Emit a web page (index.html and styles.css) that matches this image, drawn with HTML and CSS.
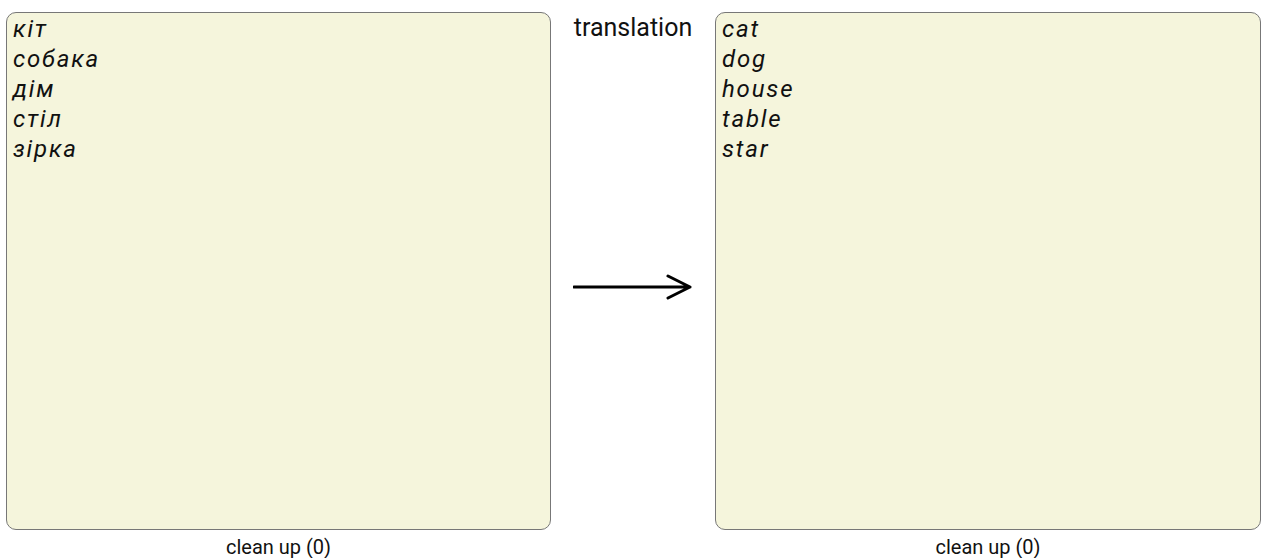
FILE: index.html
```html
<!DOCTYPE html>
<html lang="uk">
<head>
    <meta charset="UTF-8">
    <title>Translation</title>
    <link rel="stylesheet" href="styles.css">
</head>
<body>
    <div class="page">
        <div class="column">
            <div class="words">
                <div>кіт</div>
                <div>собака</div>
                <div>дім</div>
                <div>стіл</div>
                <div>зірка</div>
            </div>
            <div class="clean">clean up (0)</div>
        </div>
        <div class="middle">
            <div class="title">translation</div>
            <div class="arrow-wrap">
                <svg class="arrow" width="120" height="26" viewBox="0 0 120 26">
                    <path d="M1 13 H117 M95 2 L117 13 L95 24" fill="none" stroke="#000" stroke-width="3" stroke-linecap="round" stroke-linejoin="round"/>
                </svg>
            </div>
        </div>
        <div class="column">
            <div class="words">
                <div>cat</div>
                <div>dog</div>
                <div>house</div>
                <div>table</div>
                <div>star</div>
            </div>
            <div class="clean">clean up (0)</div>
        </div>
    </div>
</body>
</html>
```

FILE: styles.css
```css
body {
    margin: 0;
    padding: 12px 2px 0 6px;
    font-family: Roboto, "Noto Sans", sans-serif;
    background: white;
    color: #111;
}

.page {
    display: grid;
    grid-template-columns: 545px 164px 546px;
}

.column {
    display: flex;
    flex-direction: column;
}

.words {
    height: 518px;
    box-sizing: border-box;
    background-color: #f5f5dc;
    border: 1px solid #777;
    border-radius: 10px;
    padding: 1px 6px;
    font-style: italic;
    font-size: 24px;
    line-height: 30px;
    letter-spacing: 1.8px;
}

.clean {
    text-align: center;
    font-size: 20px;
    line-height: 24px;
    margin-top: 5px;
}

.middle {
    display: flex;
    flex-direction: column;
    height: 518px;
}

.title {
    text-align: center;
    font-size: 25px;
    line-height: 30px;
    margin-top: 1px;
}

.arrow-wrap {
    flex: 1;
    display: flex;
    align-items: center;
    justify-content: center;
}
```
